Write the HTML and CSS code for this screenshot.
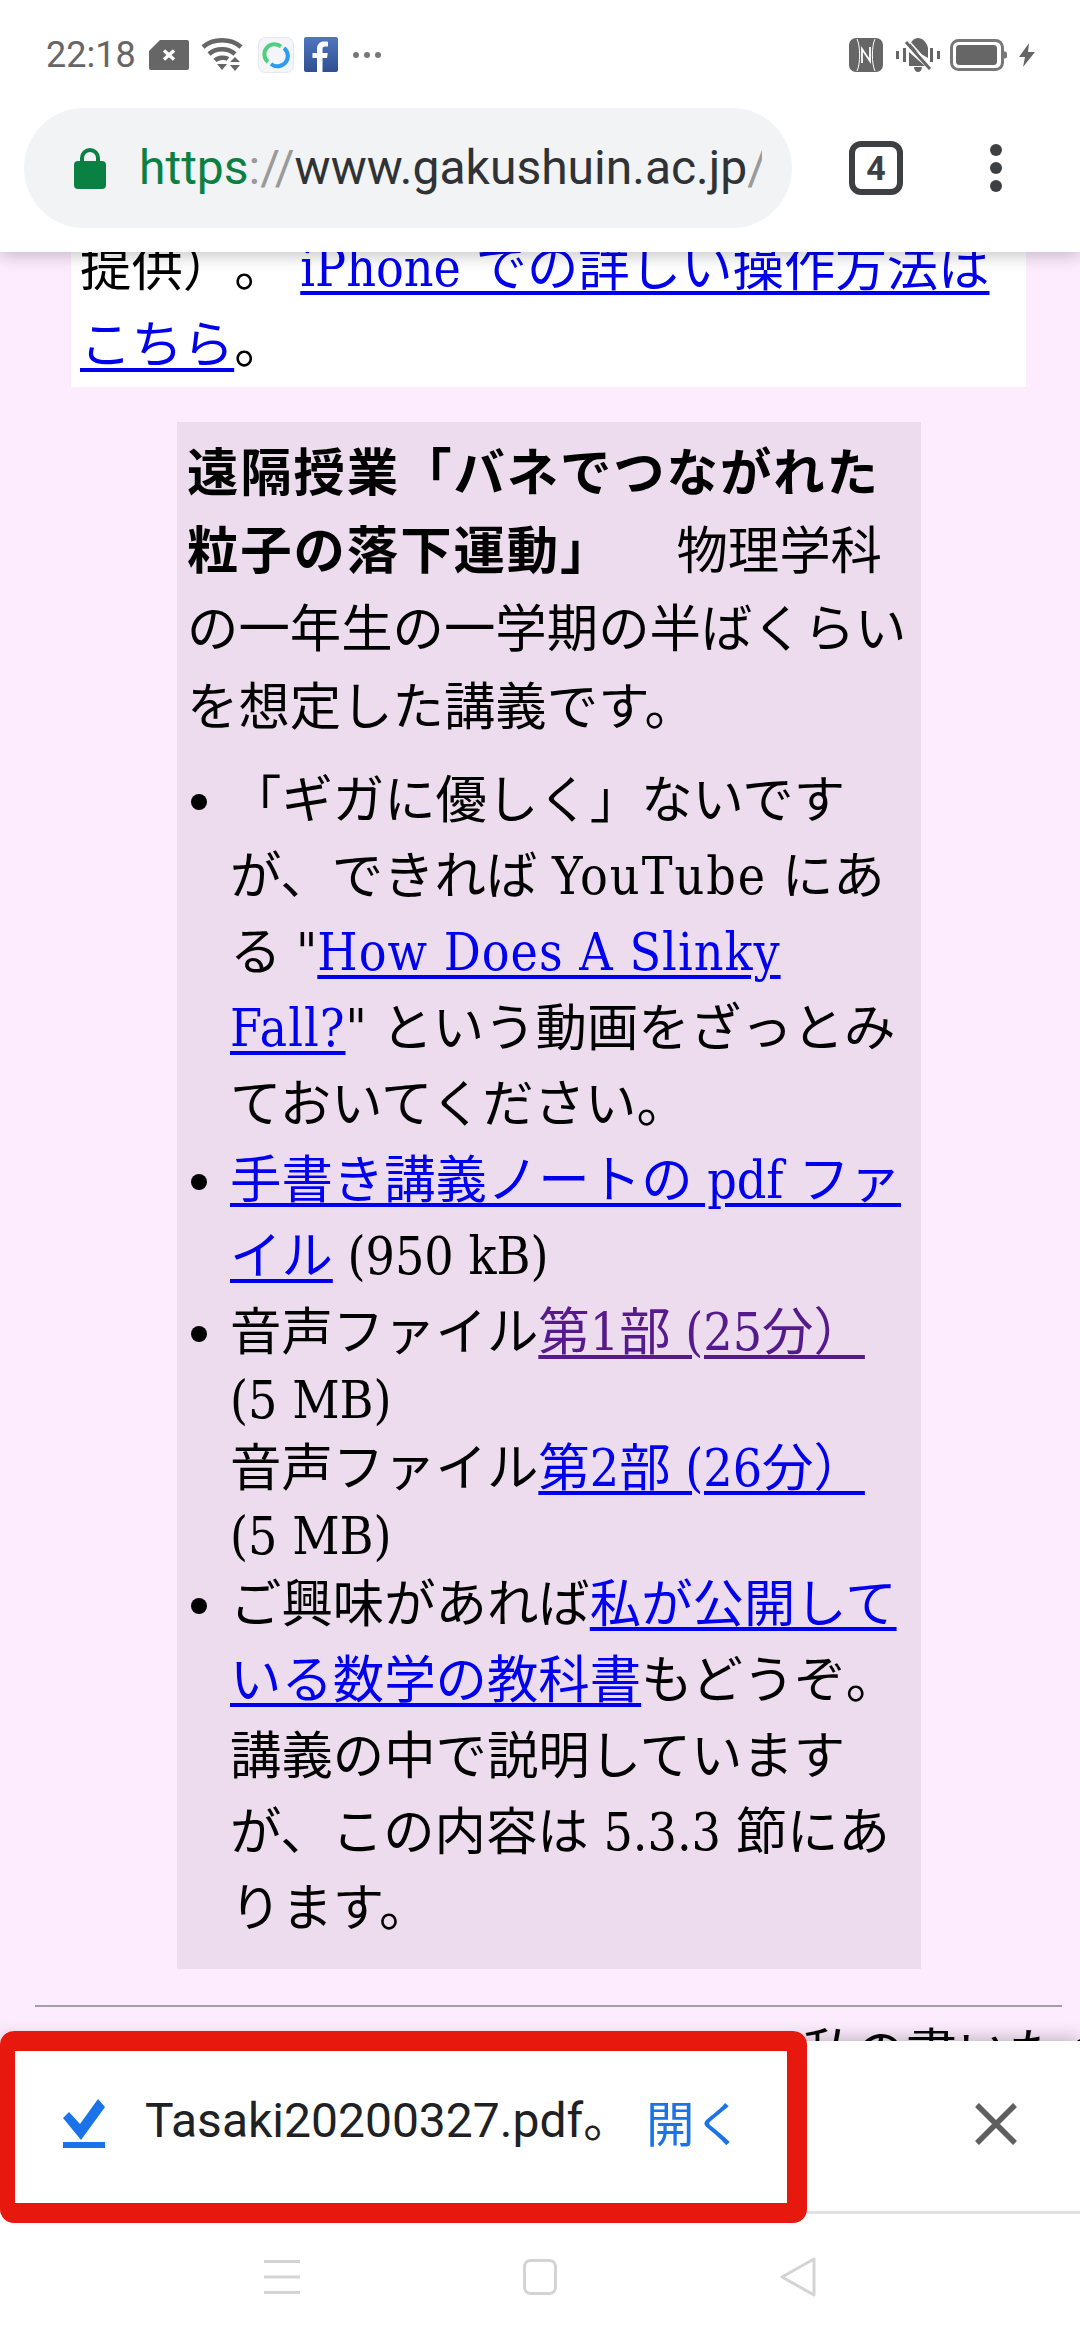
FILE: index.html
```html
<!DOCTYPE html>
<html lang="ja">
<head>
<meta charset="utf-8">
<title>Tasaki</title>
<link rel="stylesheet" href="styles.css">
</head>
<body>
<div class="screen">
  <header class="chrome">
    <div class="status">
      <div class="status-left">
        <span class="time">22:18</span>
        <svg class="ic-sim" viewBox="0 0 40 30"><path fill="#666" d="M11 0H38a2 2 0 0 1 2 2V28a2 2 0 0 1-2 2H2a2 2 0 0 1-2-2V11z"/><path stroke="#fff" stroke-width="3.4" d="M15 10.500l10 9M25 10.500l-10 9"/></svg>
        <svg class="ic-wifi" viewBox="0 0 42 34"><g fill="none" stroke="#666" stroke-width="4.500"><path d="M2 9C12 0 30 0 40 9"/><path d="M8 16C15 9.500 27 9.500 34 16"/><path d="M14 22.500C17.500 19 24.500 19 27 21"/></g><path fill="#666" d="M16 26h10l-5 6zM29 24l5-5 5 5zM29 27h10l-5 6z"/></svg>
        <svg class="ic-app" viewBox="0 0 36 36"><rect x=".5" y=".5" width="35" height="35" rx="7" fill="#f4f5f9" stroke="#e6e6ec"/><path d="M23 9.500A10 10 0 0 0 10 25" fill="none" stroke="#4fd07f" stroke-width="4"/><path d="M26 11A10 10 0 0 1 13 27" fill="none" stroke="#2d9bf0" stroke-width="4"/></svg>
        <svg class="ic-fb" viewBox="0 0 34 36"><defs><linearGradient id="fbg" x1="0" y1="0" x2="0" y2="1"><stop offset="0" stop-color="#5076c0"/><stop offset="1" stop-color="#2f4f8f"/></linearGradient></defs><rect width="34" height="35" rx="2" fill="url(#fbg)"/><path fill="#fff" d="M13 35V21H8.500v-5H13v-4c0-5 3-7.500 7-7.500 2 0 3.500.2 4 .3v4.700h-2.800c-2.200 0-2.700 1-2.700 2.700V16h5.300l-.8 5H18.500v14z"/></svg>
        <span class="more"><i></i><i></i><i></i></span>
      </div>
      <div class="status-right">
        <svg class="ic-nfc" viewBox="0 0 34 34"><path fill="#666" d="M7 0H27a7 7 0 0 1 7 7V27a7 7 0 0 1-7 7H7a7 7 0 0 1-7-7V7a7 7 0 0 1 7-7z"/><path fill="none" stroke="#fff" stroke-width="1" d="M8 1C11.500 8 11.500 26 8 33M26 1C22.500 8 22.500 26 26 33"/><path fill="none" stroke="#fff" stroke-width="1.800" d="M13 25V11L21 23V9"/></svg>
        <svg class="ic-vib" viewBox="0 0 46 34"><path fill="#666" d="M1 13h3v8H1zM42 13h3v8h-3zM8 10h3v14H8zM35 10h3v14h-3zM14 9C15 4 19 0 23 0s9 4 10 10v10l-19-11zM14 14l16 14H14zM19 29h8c0 3-2 5-4 5s-4-2-4-5z"/><path stroke="#666" stroke-width="3" d="M11 4l24 27"/><path stroke="#fff" stroke-width="1.500" d="M14 3l22 25"/></svg>
        <svg class="ic-bat" viewBox="0 0 57 32"><rect x="1.500" y="1.500" width="51" height="29" rx="7" fill="none" stroke="#777" stroke-width="3"/><rect x="6" y="6" width="41" height="20" rx="3.500" fill="#666"/><path fill="#777" d="M54 12.500h1a2 2 0 0 1 2 2v3a2 2 0 0 1-2 2h-1z"/></svg>
        <svg class="ic-bolt" viewBox="0 0 16 24"><path fill="#666" d="M10 0L0 14h6l-2 10L16 9H9z"/></svg>
      </div>
    </div>
    <div class="toolbar">
      <div class="omnibox">
        <svg class="ic-lock" viewBox="0 0 32 42"><path fill="none" stroke="#0b8043" stroke-width="4" d="M8 16V11a8 8 0 0 1 16 0v5"/><rect y="14" width="32" height="28" rx="4" fill="#0b8043"/></svg>
        <span class="url"><span class="scheme">https</span><span class="sep">://</span>www.gakushuin.ac.jp<span class="sep">/</span></span>
      </div>
      <span class="tabs">4</span>
      <span class="kebab"><i></i><i></i><i></i></span>
    </div>
  </header>

  <main class="page">
    <p class="note">提供）。 <a href="#">iPhone での詳しい操作方法はこちら</a>。</p>
    <section class="lecture">
      <p class="intro"><strong>遠隔授業「バネでつながれた粒子の落下運動」</strong> 　物理学科の一年生の一学期の半ばくらいを想定した講義です。</p>
      <ul class="items">
        <li>「ギガに優しく」ないですが、できれば <span class="latin-wide">YouTube</span> にある "<a class="latin" href="#">How Does A Slinky<br>Fall?</a>" という動画をざっとみておいてください。</li>
        <li><a href="#">手書き講義ノートの pdf ファイル</a> (950 kB)</li>
        <li>音声ファイル<a class="seen" href="#">第1部 (25分）</a><span class="size">(5 MB)</span>音声ファイル<a href="#">第2部 (26分）</a><span class="size">(5 MB)</span></li>
        <li>ご興味があれば<a href="#">私が公開している数学の教科書</a>もどうぞ。講義の中で説明していますが、この内容は 5.3.3 節にあります。</li>
      </ul>
    </section>
    <hr class="rule">
    <p class="after">私の書いたページ</p>
  </main>

  <footer class="bottom">
    <div class="download">
      <svg class="ic-done" viewBox="0 0 42 49"><path fill="#1a73e8" d="M0 19l6-6 11 12L35 0l7 8-24 33zM0 43h42v6H0z"/></svg>
      <span class="filename">Tasaki20200327.pdf。</span>
      <span class="open">開く</span>
      <svg class="ic-close" viewBox="0 0 42 42"><path stroke="#5f5f5f" stroke-width="5.500" d="M2 2l38 38M40 2L2 40"/></svg>
    </div>
    <nav class="nav">
      <svg class="ic-menu" viewBox="0 0 36 34"><path stroke="#d4d4d4" stroke-width="3" d="M0 1.500h36M0 17h36M0 32.500h36"/></svg>
      <svg class="ic-home" viewBox="0 0 34 36"><rect x="1.500" y="1.500" width="31" height="33" rx="6" fill="none" stroke="#d4d4d4" stroke-width="3"/></svg>
      <svg class="ic-back" viewBox="0 0 36 40"><path fill="none" stroke="#d4d4d4" stroke-width="3" stroke-linejoin="round" d="M34 2V38L2 20z"/></svg>
    </nav>
  </footer>

  <div class="callout"></div>
</div>
</body>
</html>
```
FILE: styles.css
```css
* { box-sizing: border-box; }
html, body { margin: 0; padding: 0; }
body { font-family: "DejaVu Serif Condensed", "DejaVu Serif", "Noto Sans CJK JP", serif; font-stretch: condensed; }
.screen {
  position: relative;
  width: 1080px;
  height: 2340px;
  display: flex;
  flex-direction: column;
  overflow: hidden;
  background: #fdecfe;
}

/* browser chrome */
.chrome {
  position: relative;
  z-index: 2;
  height: 252px;
  flex: none;
  background: #fff;
  box-shadow: 0 4px 16px rgba(0, 0, 0, .22);
}
.status {
  height: 108px;
  padding: 37px 45px 0 46px;
  display: flex;
  justify-content: space-between;
  align-items: flex-start;
}
.status-left, .status-right { display: flex; align-items: center; height: 36px; }
.time { font: 36px/36px Roboto, sans-serif; color: #666; width: 103px; }
.ic-sim { width: 40px; height: 30px; }
.ic-wifi { width: 42px; height: 34px; margin-left: 12px; }
.ic-app { width: 36px; height: 36px; margin-left: 15px; }
.ic-fb { width: 34px; height: 36px; margin-left: 10px; }
.more { display: flex; gap: 5px; margin-left: 15px; }
.more i { width: 6px; height: 6px; border-radius: 50%; background: #777; }
.ic-nfc { width: 34px; height: 34px; }
.ic-vib { width: 46px; height: 34px; margin-left: 12px; }
.ic-bat { width: 57px; height: 32px; margin-left: 9px; }
.ic-bolt { width: 16px; height: 24px; margin-left: 12px; }

.toolbar { display: flex; align-items: center; height: 120px; padding-left: 24px; }
.omnibox {
  width: 768px;
  height: 120px;
  border-radius: 60px;
  background: #f1f3f4;
  display: flex;
  align-items: center;
  padding: 0 30px 0 50px;
  flex: none;
}
.ic-lock { width: 32px; height: 42px; flex: none; }
.url {
  margin-left: 33px;
  font: 48px/60px Roboto, sans-serif;
  color: #303235;
  white-space: nowrap;
  overflow: hidden;
}
.scheme { color: #0b8043; }
.sep { color: #9a9a9a; }
.tabs {
  width: 54px;
  height: 54px;
  margin-left: 57px;
  border: 6px solid #3c4043;
  border-radius: 12px;
  font: 700 34px/42px Roboto, sans-serif;
  color: #3c4043;
  text-align: center;
  flex: none;
}
.kebab { display: flex; flex-direction: column; gap: 6px; margin-left: 87px; }
.kebab i { width: 12px; height: 12px; border-radius: 50%; background: #3c4043; }

/* page */
.page {
  flex: 1;
  min-height: 0;
  overflow: hidden;
  padding: 0 18px 0 35px;
  font-size: 51.400px;
  line-height: 76px;
  color: #000;
  text-spacing-trim: space-all;
}
.page a { color: #0000ee; text-decoration-thickness: 4px; text-underline-offset: 5px; }
.page a.seen { color: #551a8b; }
.latin { letter-spacing: 1px; }
.latin-wide { letter-spacing: 2px; }
.note {
  margin: -22px 36px 35px;
  padding: 0 9px 3px;
  background: #fff;
  line-height: 77px;
}
.lecture {
  margin: 0 141px 36px 142px;
  padding: 12px 10px 23px;
  background: #ecdcee;
}
.intro { margin: 0 0 16px; line-height: 78px; word-spacing: -3px; }
.intro strong { letter-spacing: 1.900px; }
.items { margin: 0; padding: 0 0 0 43px; }
.size { display: block; line-height: 60px; }
.rule { margin: 0 0 8px; border: 0; border-top: 2px solid #a3a0a3; }
.after { margin: 0 0 0 768px; white-space: nowrap; }

/* bottom bars */
.bottom {
  position: relative;
  z-index: 2;
  flex: none;
  height: 299px;
  background: #fff;
  box-shadow: 0 -4px 16px rgba(0, 0, 0, .22);
}
.download {
  height: 173px;
  padding: 0 63px 5px;
  display: flex;
  align-items: center;
  border-bottom: 3px solid #e0e0e0;
}
.ic-done { width: 42px; height: 49px; flex: none; }
.filename { margin: 0 0 6px 40px; width: 501px; font: 48px/60px Roboto, "Noto Sans CJK JP", sans-serif; color: #202124; white-space: nowrap; }
.open { margin-bottom: 6px; font: 48.500px/60px "Noto Sans CJK JP", sans-serif; color: #1a73e8; }
.ic-close { width: 42px; height: 42px; margin-left: auto; flex: none; }
.nav { height: 126px; display: flex; justify-content: center; align-items: center; gap: 223px; }
.ic-menu { width: 36px; height: 34px; }
.ic-home { width: 34px; height: 36px; }
.ic-back { width: 36px; height: 40px; }

/* annotation drawn over the screenshot */
.callout {
  position: absolute;
  z-index: 3;
  left: 0;
  top: 2031px;
  width: 807px;
  height: 192px;
  border: 20px solid #e7190f;
  border-left-width: 15px;
  border-radius: 14px;
}
```
